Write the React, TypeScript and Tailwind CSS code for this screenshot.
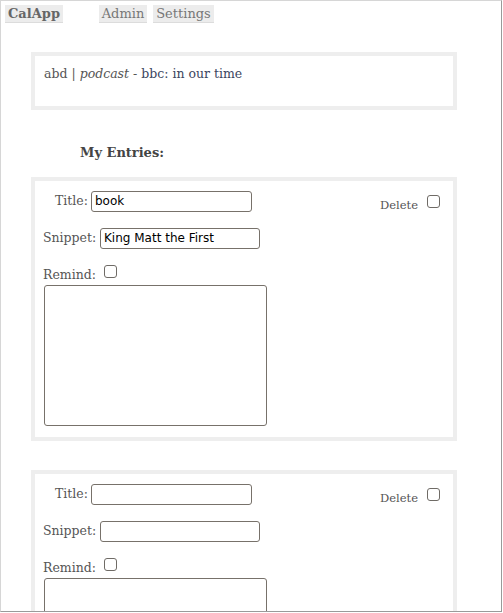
import React from 'react'

const serif = { fontFamily: '"DejaVu Serif", serif' }

function Check({ className = '' }: { className?: string }) {
    return (
        <span
            className={`inline-block w-[13px] h-[13px] rounded-[3px] border border-[#6f6b66] bg-white ${className}`}
        />
    )
}

function Entry({ title, snippet }: { title: string; snippet: string }) {
    return (
        <div className="ml-[30px] w-[426px] border-4 border-[#eeeeee] h-[264px] relative">
            <div className="absolute right-[13px] top-[14px] flex items-start gap-[9px]">
                <span className="text-[11.5px] text-[#555] mt-[2px]">Delete</span>
                <Check />
            </div>
            <div className="pt-[10px] pl-[20px] flex items-center h-[31px]">
                <span className="text-[12.5px] text-[#555] w-[36px]">Title:</span>
                <div className="w-[161px] h-[21px] border border-[#77716a] rounded-[3px] pl-[3px] text-[12px] leading-[19px] text-black font-['DejaVu_Sans']">
                    {title}
                </div>
            </div>
            <div className="pt-[16px] pl-[8px] flex items-center h-[37px]">
                <span className="text-[12.5px] text-[#555] w-[57px]">Snippet:</span>
                <div className="w-[160px] h-[21px] border border-[#77716a] rounded-[3px] pl-[3px] text-[12px] leading-[19px] text-black font-['DejaVu_Sans']">
                    {snippet}
                </div>
            </div>
            <div className="pt-[16px] pl-[8px] flex items-start h-[37px]">
                <span className="text-[12.5px] text-[#555] leading-[14px] mt-[3px] w-[61px]">Remind:</span>
                <Check />
            </div>
            <div className="ml-[9px] mt-[-1px] w-[223px] h-[141px] border border-[#77716a] rounded-[3px]" />
        </div>
    )
}

export default function App() {
    return (
        <div
            style={serif}
            className="w-[502px] h-[612px] bg-white border border-t-[#d6d6d6] border-l-[#d6d6d6] border-r-[#9a9a9a] border-b-[#9a9a9a] overflow-hidden"
        >
            <div className="flex pt-[4px] pl-[4px] text-[13px] leading-[17px] text-[#777]">
                <span className="w-[58px] pl-[3px] bg-[#ececec] border-b border-[#dcdcdc] font-bold text-[#666]">
                    CalApp
                </span>
                <span className="ml-[36px] w-[48px] text-center bg-[#ececec] border-b border-[#dcdcdc]">Admin</span>
                <span className="ml-[6px] w-[61px] text-center bg-[#ececec] border-b border-[#dcdcdc]">Settings</span>
            </div>
            <div className="mt-[29px] ml-[30px] w-[426px] h-[58px] border-4 border-[#eeeeee] pl-[9px] pt-[9px] text-[12.5px] text-[#555]">
                abd | <i>podcast</i> - <span className="text-[#3c4660]">bbc: in our time</span>
            </div>
            <div className="mt-[33px] ml-[79px] text-[13px] font-bold text-[#444]">My Entries:</div>
            <div className="mt-[14px] flex flex-col gap-[29px]">
                <Entry title="book" snippet="King Matt the First" />
                <Entry title="" snippet="" />
            </div>
        </div>
    )
}
